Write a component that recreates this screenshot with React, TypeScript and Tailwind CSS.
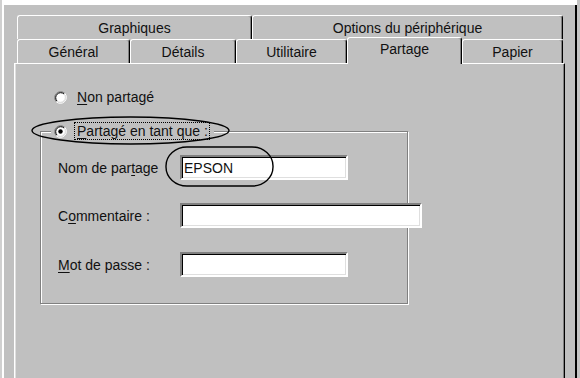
type TabProps = {
  label: string;
  width: string;
  selected?: boolean;
};

function Tab({ label, width, selected }: TabProps) {
  return (
    <div
      className={
        "flex shrink-0 justify-center rounded-t-[3px] border-t border-l border-r border-t-white border-l-white border-r-black bg-[#c0c0c0] shadow-[inset_-1px_0_#808080] " +
        width +
        (selected
          ? " relative z-10 -mt-[2px] -mb-[1px] items-start pt-[4px]"
          : " items-center")
      }
    >
      <span>{label}</span>
    </div>
  );
}

function Radio({ checked }: { checked?: boolean }) {
  return (
    <svg width="13" height="13" viewBox="0 0 13 13" className="shrink-0">
      <circle cx="6.5" cy="6.5" r="5" fill="#fff" />
      <path d="M2.26 10.74 A6 6 0 0 1 10.74 2.26" fill="none" stroke="#808080" strokeWidth="1" />
      <path d="M10.74 2.26 A6 6 0 0 1 2.26 10.74" fill="none" stroke="#fff" strokeWidth="1" />
      <path d="M2.97 10.03 A5 5 0 0 1 10.03 2.97" fill="none" stroke="#000" strokeWidth="1" />
      <path d="M10.03 2.97 A5 5 0 0 1 2.97 10.03" fill="none" stroke="#dfdfdf" strokeWidth="1" />
      {checked && <circle cx="6.5" cy="6.5" r="2.2" fill="#000" />}
    </svg>
  );
}

function Field({ width, value }: { width: string; value?: string }) {
  return (
    <div
      className={
        "flex h-[25px] shrink-0 items-center border-2 border-t-[#808080] border-l-[#808080] border-b-white border-r-white bg-white pl-[1px] shadow-[inset_1px_1px_#000,inset_-1px_-1px_#dfdfdf] " +
        width
      }
    >
      {value && <span className="pl-[1px]">{value}</span>}
    </div>
  );
}

export default function App() {
  return (
    <div className="relative flex h-[378px] w-[580px] overflow-hidden bg-[#c0c0c0] font-['Liberation_Sans',Arial,sans-serif] text-[14px] leading-none text-[#111]">
      <div className="w-[2px] shrink-0 bg-[#d0d0d0]" />

      {/* Dialog */}
      <div className="flex w-[575px] shrink-0 flex-col border-l-2 border-white">
        <div className="h-[5px] shrink-0 bg-white" />

        <div className="flex flex-1 flex-col border-r-2 border-r-black bg-[#c0c0c0] px-[10px] pt-[10px]">
          {/* Back tab row */}
          <div className="ml-[3px] flex h-[24px]">
            <Tab label="Graphiques" width="w-[235px]" />
            <Tab label="Options du périphérique" width="w-[311px]" />
          </div>

          {/* Front tab row */}
          <div className="ml-[3px] flex h-[24px]">
            <Tab label="Général" width="w-[113px]" />
            <Tab label="Détails" width="w-[106px]" />
            <Tab label="Utilitaire" width="w-[111px]" />
            <Tab label="Partage" width="w-[115px]" selected />
            <Tab label="Papier" width="w-[101px]" />
          </div>

          {/* Panel */}
          <div className="flex-1 border-t border-l border-r border-t-white border-l-white border-r-black shadow-[inset_-1px_0_#808080,inset_1px_0_#dfdfdf]">
            <div className="ml-[39px] mt-[26px] flex h-[14px] items-center">
              <Radio />
              <span className="ml-[10px]">
                <span className="underline underline-offset-[2px]">N</span>on partagé
              </span>
            </div>

            {/* Group box */}
            <div className="ml-[25px] mt-[27px] h-[173px] w-[368px] border border-[#808080] shadow-[inset_1px_1px_#fff,1px_1px_#fff]">
              <div className="-mt-[10px] ml-[10px] flex h-[18px] w-fit items-center bg-[#c0c0c0] pl-[3px] pr-[4px]">
                <Radio checked />
                <span className="ml-[7px] flex h-[18px] items-center border border-dotted border-black pl-[2px] pr-[1px]">
                  <span className="underline underline-offset-[2px]">P</span>artagé en tant que :
                </span>
              </div>

              <div className="mt-[15px] flex items-center pl-[17px]">
                <span className="w-[122px] shrink-0">
                  Nom de par<span className="underline underline-offset-[2px]">t</span>age
                </span>
                <Field width="w-[168px]" value="EPSON" />
              </div>

              <div className="mt-[23px] flex items-center pl-[17px]">
                <span className="w-[122px] shrink-0">
                  C<span className="underline underline-offset-[2px]">o</span>mmentaire :
                </span>
                <Field width="w-[242px]" />
              </div>

              <div className="mt-[24px] flex items-center pl-[17px]">
                <span className="w-[122px] shrink-0">
                  <span className="underline underline-offset-[2px]">M</span>ot de passe :
                </span>
                <Field width="w-[168px]" />
              </div>
            </div>
          </div>
        </div>
      </div>

      <div className="w-[3px] shrink-0 bg-[#c4c4c4]" />

      {/* Hand-drawn highlight ovals */}
      <svg
        className="pointer-events-none absolute inset-0"
        width="580"
        height="378"
        viewBox="0 0 580 378"
      >
        <ellipse cx="130.5" cy="130.5" rx="98.5" ry="13.5" fill="none" stroke="#000" strokeWidth="1.4" />
        <rect x="166" y="147" width="107" height="39" rx="21" ry="19" fill="none" stroke="#000" strokeWidth="1.4" />
      </svg>
    </div>
  );
}
